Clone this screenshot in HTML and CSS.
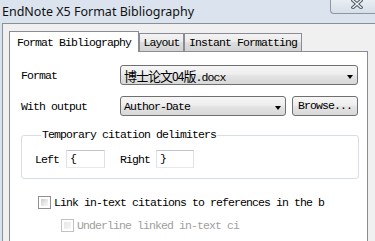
FILE: index.html
```
<!DOCTYPE html>
<html>
<head>
<meta charset="utf-8">
<link rel="stylesheet" href="styles.css">
</head>
<body>
<div class="win">
  <div class="titlebar">
    <span class="title">EndNote X5 Format Bibliography</span>
    <div class="close">
      <svg width="12" height="10" viewBox="0 0 12 10">
        <path d="M2 1.5 L10 8.5 M10 1.5 L2 8.5" stroke="#4f5964" stroke-width="3.4" stroke-linecap="square" fill="none"/>
        <path d="M2 1.5 L10 8.5 M10 1.5 L2 8.5" stroke="#eef2f6" stroke-width="1.4" stroke-linecap="square" fill="none"/>
      </svg>
    </div>
  </div>
  <div class="client">
    <div class="tabs">
      <div class="tab active">Format Bibliography</div>
      <div class="tab t-layout">Layout</div>
      <div class="tab t-instant">Instant Formatting</div>
    </div>
    <div class="panel">
      <div class="row first">
        <span class="lbl">Format</span>
        <div class="combo wide"><span class="val"><span class="cjk">博士论文</span><span class="digits">04</span><span class="cjk">版</span>.docx</span><span class="arrow"></span></div>
      </div>
      <div class="row second">
        <span class="lbl">With output</span>
        <div class="combo mid"><span class="val">Author-Date</span><span class="arrow"></span></div>
        <div class="btn">Browse...</div>
      </div>
      <fieldset class="group">
        <legend>Temporary citation delimiters</legend>
        <div class="delims">
          <span class="dl">Left</span>
          <div class="input in-left">{</div>
          <span class="dl dr">Right</span>
          <div class="input in-right">}</div>
        </div>
      </fieldset>
      <div class="check c1">
        <span class="box"></span>
        <span class="ctext t1">Link in-text citations to references in the b</span>
      </div>
      <div class="check c2 disabled">
        <span class="box"></span>
        <span class="ctext t2">Underline linked in-text ci</span>
      </div>
    </div>
  </div>
</div>
</body>
</html>
```

FILE: styles.css
```
html, body {
  margin: 0;
  padding: 0;
}
body {
  width: 375px;
  height: 241px;
  overflow: hidden;
  background: #dae3ed;
}
.win {
  width: 375px;
  height: 241px;
  display: flex;
  flex-direction: column;
}
.titlebar {
  height: 23px;
  flex: none;
  display: flex;
  align-items: flex-start;
  background: #dbe4ee;
}
.title {
  font-family: "Noto Sans", sans-serif;
  font-size: 12.5px;
  line-height: 23px;
  color: #111;
  padding-left: 2px;
}
.close {
  margin-left: auto;
  width: 45px;
  height: 14px;
  box-sizing: border-box;
  border: 1px solid #8e97a1;
  border-top: none;
  border-right: none;
  border-radius: 0 0 0 4px;
  background: linear-gradient(#e9eef3, #d6dee7);
  display: flex;
  align-items: flex-start;
}
.close svg {
  display: block;
  margin-left: 20px;
  margin-top: -1px;
}
.client {
  flex: 1;
  margin-left: 2px;
  border-left: 1px solid #8a9098;
  border-top: 1px solid #8a9098;
  background: #f0f0f0;
  padding: 7px 0 0 6px;
  font-family: "Liberation Mono", "Noto Sans CJK SC", monospace;
  font-size: 11.5px;
  letter-spacing: -0.9px;
  color: #000;
}
.tabs {
  display: flex;
  align-items: flex-end;
  height: 20px;
}
.tab {
  box-sizing: border-box;
  height: 18px;
  border: 1px solid #898c95;
  border-bottom: none;
  background: linear-gradient(#f3f3f3, #ebebeb 50%, #dddddd 50%, #d3d3d3);
  text-align: center;
  line-height: 17px;
  white-space: nowrap;
}
.tab.active {
  width: 130px;
  height: 21px;
  margin-bottom: -1px;
  background: #fff;
  position: relative;
  z-index: 1;
  line-height: 21px;
  border-radius: 1px 1px 0 0;
}
.t-layout {
  width: 45px;
}
.t-instant {
  width: 118px;
}
.panel {
  width: 359px;
  height: 200px;
  box-sizing: border-box;
  border: 1px solid #898c95;
  background: #fff;
  padding: 13px 0 0 11px;
}
.row {
  display: flex;
  align-items: center;
  height: 20px;
}
.row.second {
  margin-top: 11px;
}
.lbl {
  width: 99px;
  flex: none;
  white-space: nowrap;
}
.combo {
  box-sizing: border-box;
  height: 20px;
  border: 1px solid #707070;
  border-radius: 3px;
  background: linear-gradient(#f6f6f6, #eeeeee 45%, #e3e3e3 55%, #d8d8d8);
  display: flex;
  align-items: center;
  padding: 0 4px 0 3px;
}
.combo.wide {
  width: 238px;
}
.combo.mid {
  width: 166px;
}
.val {
  flex: 1;
  white-space: nowrap;
}
.cjk {
  font-family: "Noto Sans CJK SC", sans-serif;
  font-size: 13px;
  letter-spacing: -1px;
}
.digits {
  font-family: "Noto Sans CJK SC", sans-serif;
  font-size: 12px;
  letter-spacing: -0.9px;
}
.arrow {
  width: 0;
  height: 0;
  border-left: 3.5px solid transparent;
  border-right: 3.5px solid transparent;
  border-top: 4px solid #000;
  margin-top: 3px;
}
.btn {
  box-sizing: border-box;
  width: 66px;
  height: 20px;
  margin-left: 6px;
  border: 1px solid #707070;
  border-radius: 3px;
  background: linear-gradient(#f6f6f6, #eeeeee 45%, #e3e3e3 55%, #d8d8d8);
  text-align: center;
  line-height: 18px;
  white-space: nowrap;
}
.group {
  box-sizing: border-box;
  width: 338px;
  margin: 13px 0 0 0;
  padding: 9px 0 10px 13px;
  border: 1px solid #d5dfe5;
  border-radius: 3px;
  min-width: 0;
}
.group legend {
  margin-left: 6px;
  padding: 0 1px;
  line-height: 12px;
  white-space: nowrap;
}
.delims {
  display: flex;
  align-items: center;
  height: 18px;
}
.input {
  box-sizing: border-box;
  height: 18px;
  border: 1px solid;
  border-color: #bfc2c8 #dfe2e8 #e6e9ee #dfe2e8;
  background: #fff;
  padding-left: 3px;
  line-height: 16px;
}
.in-left {
  width: 39px;
  margin-left: 7px;
}
.dr {
  margin-left: 15px;
}
.in-right {
  width: 38px;
  margin-left: 6px;
}
.check {
  display: flex;
  align-items: center;
  height: 13px;
}
.c1 {
  margin: 17px 0 0 17px;
}
.c2 {
  margin: 10px 0 0 40px;
}
.box {
  box-sizing: border-box;
  width: 13px;
  height: 13px;
  flex: none;
  border: 1px solid #8f8f8f;
  background: #fff;
  padding: 2px;
  display: flex;
}
.box::before {
  content: "";
  flex: 1;
  background: linear-gradient(135deg, #c9ccd1, #eeeeee 70%, #f7f7f7);
}
.ctext {
  margin-left: 3px;
  white-space: nowrap;
  line-height: 13px;
}
.disabled {
  color: #a0a0a0;
}
.disabled .box {
  border-color: #c2c2c2;
}
.disabled .box::before {
  background: linear-gradient(135deg, #e6e6e6, #f6f6f6);
}
```
